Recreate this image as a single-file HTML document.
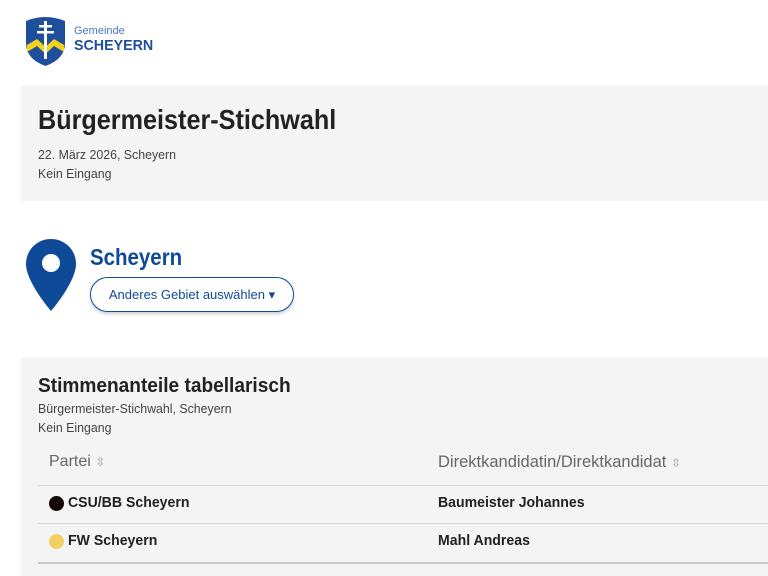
<!DOCTYPE html>
<html><head><meta charset="utf-8"><style>
*{margin:0;padding:0;box-sizing:border-box}
body{width:768px;height:576px;overflow:hidden;background:#fff;font-family:"Liberation Sans",sans-serif;color:#333;position:relative}
.abs{position:absolute;transform-origin:0 0;white-space:nowrap}
.panel{background:#f4f4f4}
</style></head><body>
<svg class="abs" style="left:23px;top:15px" width="45" height="52" viewBox="0 0 45 52">
<path d="M3 6 Q22 -2 42 6 L42 28 Q42 44 22.5 51 Q3 44 3 28 Z" fill="#1f4e9c"/>
<path d="M4 30 L14 24 L22.5 32 L31 24 L41 30 L41 37 L31 31 L22.5 39 L14 31 L4 37 Z" fill="#f2d31b"/>
<rect x="21" y="6" width="3" height="38" fill="#fff"/>
<rect x="16" y="10" width="13" height="2.5" fill="#fff"/>
<rect x="14" y="16" width="17" height="2.5" fill="#fff"/>
</svg>
<div class="abs" style="left:74px;top:25px;font-size:11px;color:#4a78c0">Gemeinde</div>
<div class="abs" style="left:74px;top:37px;font-size:15px;font-weight:bold;color:#1f4e9c;transform:scaleX(0.95)">SCHEYERN</div>

<div class="abs panel" style="left:21px;top:86px;width:747px;height:115px"></div>
<div class="abs" style="left:38px;top:104px;font-size:28px;font-weight:bold;color:#222;transform:scaleX(0.9)">Bürgermeister-Stichwahl</div>
<div class="abs" style="left:38px;top:147px;font-size:13px;color:#444;transform:scaleX(0.95)">22. März 2026, Scheyern</div>
<div class="abs" style="left:38px;top:166px;font-size:13px;color:#444;transform:scaleX(0.95)">Kein Eingang</div>

<svg class="abs" style="left:25px;top:238px" width="52" height="74" viewBox="0 0 52 74">
<path d="M26 1 C12 1 1 12 1 26 C1 44 26 73 26 73 C26 73 51 44 51 26 C51 12 40 1 26 1 Z" fill="#0e4a97"/>
<circle cx="26" cy="25" r="9" fill="#fff"/>
</svg>
<div class="abs" style="left:90px;top:244px;font-size:23px;font-weight:bold;color:#0e4a97;transform:scaleX(0.89)">Scheyern</div>
<div class="abs" style="left:90px;top:277px;width:204px;height:35px;border:1px solid #0e4a97;border-radius:18px;box-shadow:0 2px 3px rgba(0,0,0,.2);font-size:13px;color:#0e4a97;line-height:33px;text-align:center">Anderes Gebiet auswählen ▾</div>

<div class="abs panel" style="left:21px;top:358px;width:747px;height:218px"></div>
<div class="abs" style="left:38px;top:375px;font-size:20px;font-weight:bold;color:#222;transform:scaleX(0.955)">Stimmenanteile tabellarisch</div>
<div class="abs" style="left:38px;top:401px;font-size:13px;color:#444;transform:scaleX(0.95)">Bürgermeister-Stichwahl, Scheyern</div>
<div class="abs" style="left:38px;top:420px;font-size:13px;color:#444;transform:scaleX(0.95)">Kein Eingang</div>
<div class="abs" style="left:49px;top:453px;font-size:16px;color:#666">Partei <span style="font-size:12px;color:#999">⇳</span></div>
<div class="abs" style="left:438px;top:453px;font-size:16.5px;color:#666">Direktkandidatin/Direktkandidat <span style="font-size:12px;color:#999">⇳</span></div>
<div class="abs" style="left:38px;top:485px;width:730px;height:1px;background:#d6d6d6"></div>
<div class="abs" style="left:49px;top:496px;width:15px;height:15px;border-radius:50%;background:#120606"></div>
<div class="abs" style="left:68px;top:494px;font-size:15px;font-weight:bold;color:#222;transform:scaleX(0.94)">CSU/BB Scheyern</div>
<div class="abs" style="left:438px;top:494px;font-size:15px;font-weight:bold;color:#222;transform:scaleX(0.94)">Baumeister Johannes</div>
<div class="abs" style="left:38px;top:523px;width:730px;height:1px;background:#d6d6d6"></div>
<div class="abs" style="left:49px;top:534px;width:15px;height:15px;border-radius:50%;background:#f0d064"></div>
<div class="abs" style="left:68px;top:532px;font-size:15px;font-weight:bold;color:#222;transform:scaleX(0.94)">FW Scheyern</div>
<div class="abs" style="left:438px;top:532px;font-size:15px;font-weight:bold;color:#222;transform:scaleX(0.94)">Mahl Andreas</div>
<div class="abs" style="left:38px;top:562px;width:730px;height:2px;background:#c8c8c8"></div>
</body></html>
